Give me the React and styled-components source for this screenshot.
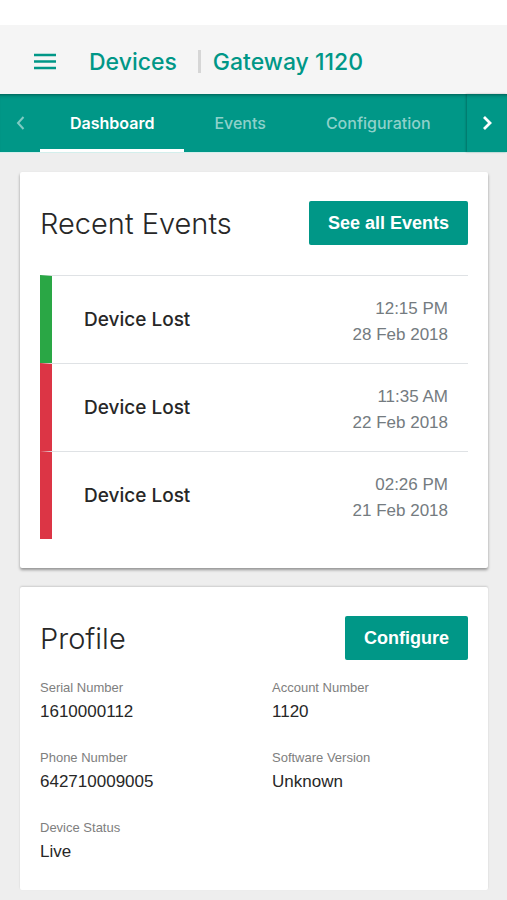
import React, { useState } from "react";
import styled, { createGlobalStyle } from "styled-components";

const TEAL = "#009787";

const GlobalStyle = createGlobalStyle`
  * { box-sizing: border-box; }
  body {
    margin: 0;
    background: #eeeeee;
    color: #272727;
    font-family: "Liberation Sans", Arial, sans-serif;
    font-size: 17px;
  }
  button { font: inherit; border: 0; cursor: pointer; }
`;

const StatusBar = styled.div`
  height: 25px;
  background: #ffffff;
`;

const Header = styled.header`
  display: flex;
  align-items: center;
  height: 69px;
  padding: 4px 32px 0;
  background: #f5f5f5;
`;

const MenuButton = styled.button`
  display: flex;
  padding: 0;
  margin-right: 31px;
  background: none;
  color: ${TEAL};
`;

const Breadcrumb = styled.nav`
  display: flex;
  align-items: center;
  font-family: Inter, "Liberation Sans", sans-serif;
  font-size: 23px;
  font-weight: 500;
  line-height: 28px;
  white-space: nowrap;
  color: ${TEAL};
`;

const Crumb = styled.a`
  color: inherit;
  text-decoration: none;
`;

const Divider = styled.span`
  width: 3px;
  height: 23px;
  margin: 0 12px 0 21px;
  background: #d6d6d6;
`;

const TabBar = styled.div`
  display: flex;
  height: 59px;
  background: ${TEAL};
  border-bottom: 1px solid #d3efec;
  box-shadow: inset 0 4px 4px -4px rgba(0, 0, 0, 0.6);
`;

const ScrollButton = styled.button`
  display: flex;
  flex: none;
  align-items: center;
  justify-content: center;
  width: 40px;
  padding: 0;
  background: none;
  color: ${(p) => (p.$dim ? "#7fcbc3" : "#ffffff")};
  box-shadow: ${(p) => (p.$dim ? "none" : "-1px 0 2px rgba(0, 0, 0, 0.25)")};
`;

const TabList = styled.div`
  display: flex;
  flex: 1;
  min-width: 0;
  overflow: hidden;
`;

const Tab = styled.button`
  padding: 3px 30px 0;
  background: none;
  border-bottom: 3px solid ${(p) => (p.$active ? "#ffffff" : "transparent")};
  color: ${(p) => (p.$active ? "#ffffff" : "#8ed1ca")};
  && {
    font-family: Inter, "Liberation Sans", sans-serif;
    font-size: 16px;
    font-weight: ${(p) => (p.$active ? 600 : 500)};
  }
`;

const Page = styled.main`
  display: flex;
  flex-direction: column;
  gap: 19px;
  padding: 19px 19px 10px 20px;
`;

const Card = styled.section`
  padding: 29px 20px ${(p) => (p.$compact ? "24px" : "29px")};
  background: #ffffff;
  border-radius: 2px;
  box-shadow: ${(p) =>
    p.$compact
      ? "0 -1px 2px rgba(0, 0, 0, 0.14)"
      : "0 2px 3px rgba(0, 0, 0, 0.38)"};
`;

const CardHeader = styled.div`
  display: flex;
  align-items: center;
  justify-content: space-between;
  min-height: 44px;
`;

const CardTitle = styled.h2`
  margin: 0;
  padding-top: 2px;
  font-family: Inter, "Liberation Sans", sans-serif;
  font-size: 29px;
  font-weight: 300;
  line-height: 36px;
`;

const ActionButton = styled.button`
  height: 44px;
  padding: 0 19px;
  border-radius: 2px;
  background: ${TEAL};
  color: #ffffff;
  white-space: nowrap;
  && {
    font-size: 18px;
    font-weight: 700;
  }
`;

const EventList = styled.ul`
  margin: 30px 0 0;
  padding: 0;
  list-style: none;
`;

const EventRow = styled.li`
  display: flex;
  align-items: center;
  justify-content: space-between;
  height: 88px;
  padding: 4px 20px 0 32px;
  border-top: 1px solid #dfe2e5;
  border-left: 12px solid ${(p) => p.$color};
`;

const EventName = styled.span`
  font-family: Inter, "Liberation Sans", sans-serif;
  font-size: 19px;
  font-weight: 500;
  line-height: 22px;
  padding-bottom: 3px;
`;

const EventTime = styled.time`
  display: flex;
  flex-direction: column;
  line-height: 26px;
  text-align: right;
  color: #747b80;
`;

const Details = styled.dl`
  display: grid;
  grid-template-columns: 1fr 1fr;
  column-gap: 36px;
  row-gap: 22px;
  margin: 18px 0 0;
`;

const DetailLabel = styled.dt`
  font-size: 13px;
  line-height: 20px;
  color: #7e7e7e;
`;

const DetailValue = styled.dd`
  margin: 0;
  line-height: 28px;
`;

const MenuIcon = () => (
  <svg width="26" height="18" viewBox="0 0 26 18" aria-hidden="true">
    <path d="M2 2H24M2 8.5H24M2 15H24" stroke="currentColor" strokeWidth="2.6" />
  </svg>
);

const Chevron = ({ left }) => (
  <svg width="12" height="16" viewBox="0 0 12 16" fill="none" aria-hidden="true">
    <path
      d={left ? "M9.5 2L4 8L9.5 14" : "M3 2L9 8L3 14"}
      stroke="currentColor"
      strokeWidth={left ? 2 : 2.8}
    />
  </svg>
);

const TABS = ["Dashboard", "Events", "Configuration"];

const EVENTS = [
  { name: "Device Lost", time: "12:15 PM", date: "28 Feb 2018", color: "#2aa745" },
  { name: "Device Lost", time: "11:35 AM", date: "22 Feb 2018", color: "#dc3545" },
  { name: "Device Lost", time: "02:26 PM", date: "21 Feb 2018", color: "#dc3545" },
];

const PROFILE = [
  ["Serial Number", "1610000112"],
  ["Account Number", "1120"],
  ["Phone Number", "642710009005"],
  ["Software Version", "Unknown"],
  ["Device Status", "Live"],
];

export default function App() {
  const [active, setActive] = useState("Dashboard");
  return (
    <>
      <GlobalStyle />
      <StatusBar />
      <Header>
        <MenuButton aria-label="Menu">
          <MenuIcon />
        </MenuButton>
        <Breadcrumb>
          <Crumb href="#devices">Devices</Crumb>
          <Divider />
          <span>Gateway 1120</span>
        </Breadcrumb>
      </Header>
      <TabBar>
        <ScrollButton $dim aria-label="Previous tabs">
          <Chevron left />
        </ScrollButton>
        <TabList role="tablist">
          {TABS.map((tab) => (
            <Tab
              key={tab}
              role="tab"
              aria-selected={tab === active}
              $active={tab === active}
              onClick={() => setActive(tab)}
            >
              {tab}
            </Tab>
          ))}
        </TabList>
        <ScrollButton aria-label="Next tabs">
          <Chevron />
        </ScrollButton>
      </TabBar>
      <Page>
        <Card>
          <CardHeader>
            <CardTitle>Recent Events</CardTitle>
            <ActionButton>See all Events</ActionButton>
          </CardHeader>
          <EventList>
            {EVENTS.map((e) => (
              <EventRow key={e.date} $color={e.color}>
                <EventName>{e.name}</EventName>
                <EventTime>
                  <span>{e.time}</span>
                  <span>{e.date}</span>
                </EventTime>
              </EventRow>
            ))}
          </EventList>
        </Card>
        <Card $compact>
          <CardHeader>
            <CardTitle>Profile</CardTitle>
            <ActionButton>Configure</ActionButton>
          </CardHeader>
          <Details>
            {PROFILE.map(([label, value]) => (
              <div key={label}>
                <DetailLabel>{label}</DetailLabel>
                <DetailValue>{value}</DetailValue>
              </div>
            ))}
          </Details>
        </Card>
      </Page>
    </>
  );
}
